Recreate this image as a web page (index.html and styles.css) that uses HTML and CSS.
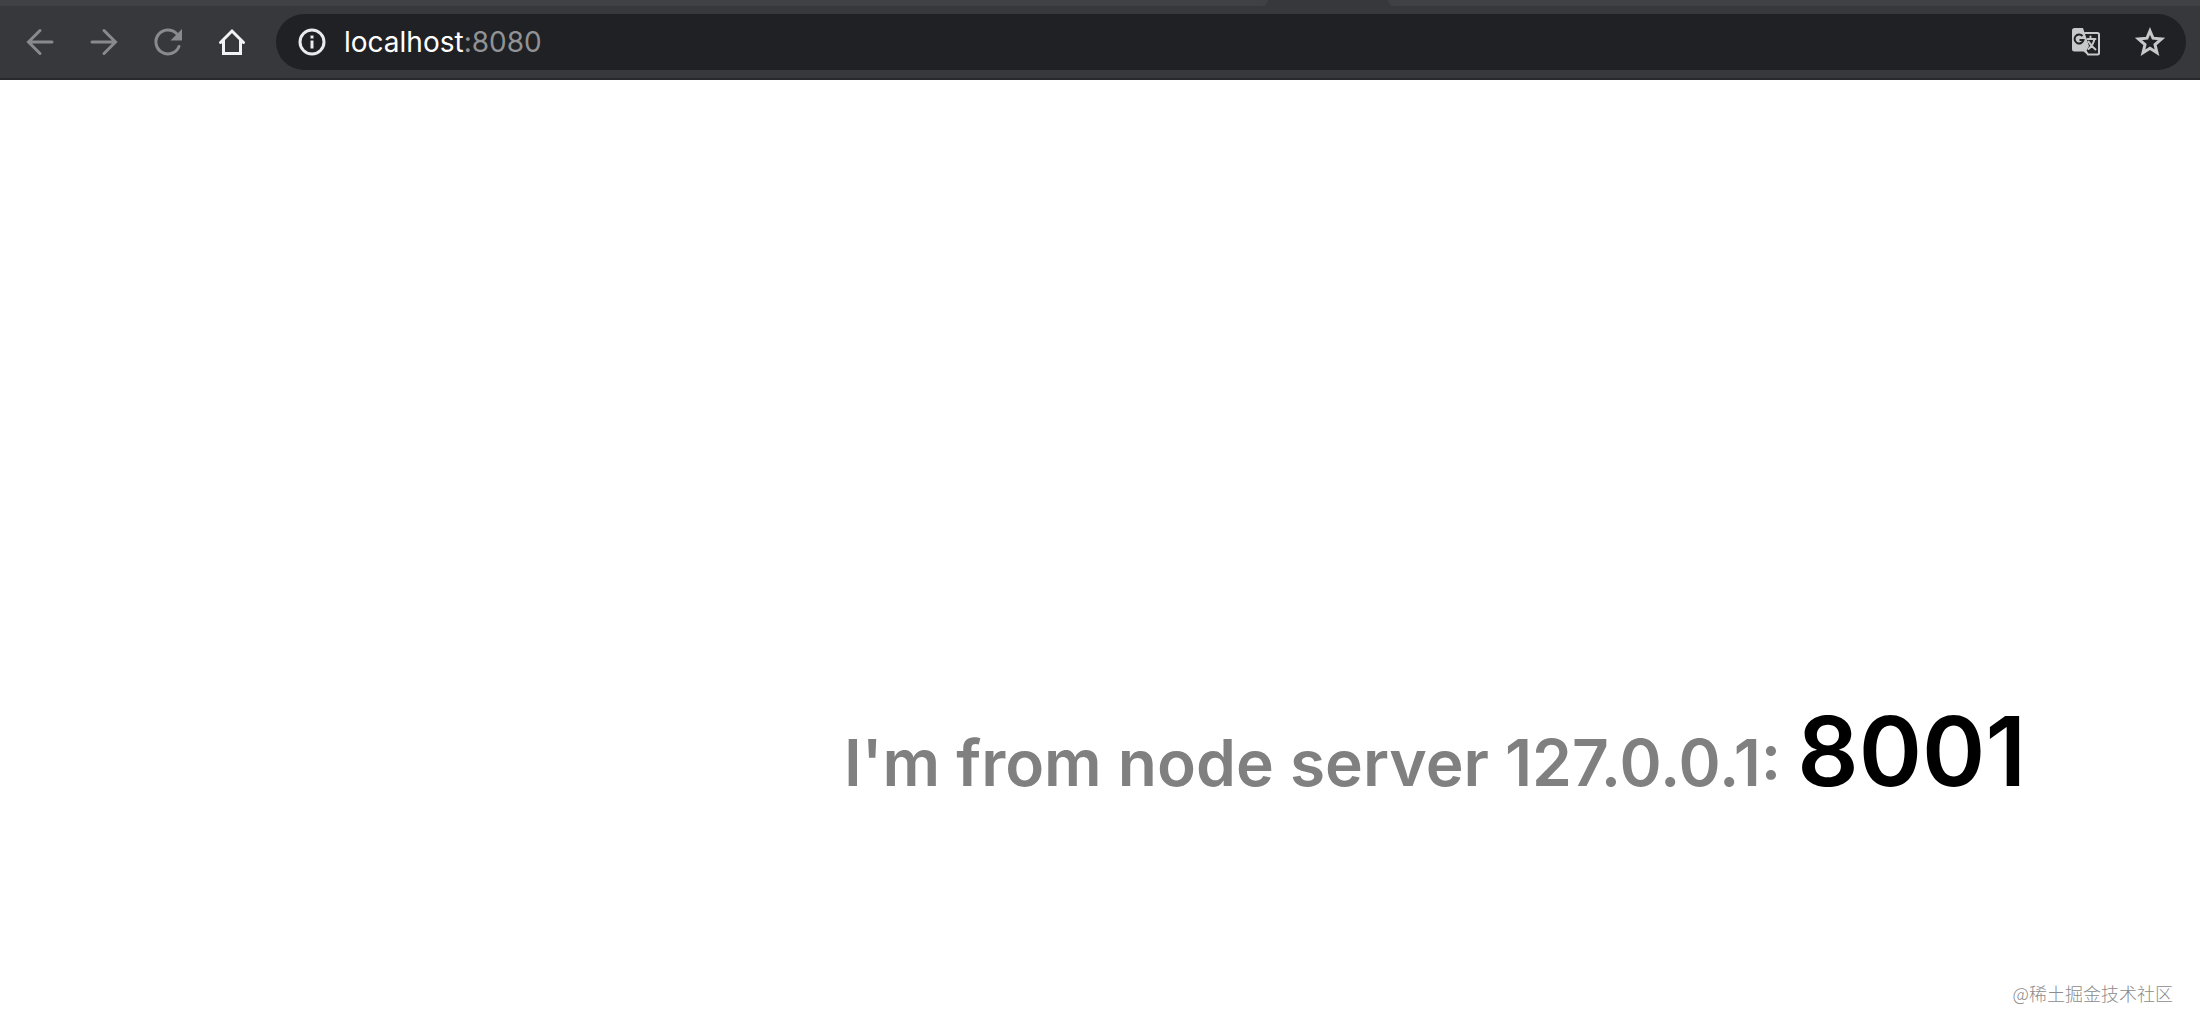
FILE: index.html
```html
<!DOCTYPE html>
<html lang="en">
<head>
<meta charset="utf-8">
<title>localhost:8080</title>
<link rel="stylesheet" href="styles.css">
</head>
<body>
<header class="browser">
  <div class="tab-strip">
    <div class="tabs-before"></div>
    <div class="tab-active"></div>
    <div class="tabs-after"></div>
  </div>
  <div class="toolbar">
    <nav class="nav">
      <button class="icon-button dim" type="button" aria-label="Back">
        <svg viewBox="0 0 32 32"><path d="M28 16H5M16 4.500L4.500 16L16 27.500"/></svg>
      </button>
      <button class="icon-button dim" type="button" aria-label="Forward">
        <svg viewBox="0 0 32 32"><path d="M4 16H27M16 4.500L27.500 16L16 27.500"/></svg>
      </button>
      <button class="icon-button dim" type="button" aria-label="Reload">
        <svg viewBox="0 0 32 32"><path d="M27 20.500A12 12 0 1 1 24.500 7.500"/><path class="fill" d="M30 3V14.500H18.500Z"/></svg>
      </button>
      <button class="icon-button home" type="button" aria-label="Home">
        <svg viewBox="0 0 32 32"><path d="M4.500 16.500L16 5L27.500 16.500M7.500 14.500V27.500H24.500V14.500"/></svg>
      </button>
    </nav>
    <div class="address">
      <svg class="info" viewBox="0 0 32 32"><circle cx="16" cy="16" r="12"/><path class="fill" d="M14.500 14.500H17.500V22.500H14.500ZM14.500 9.500H17.500V12.500H14.500Z"/></svg>
      <span class="url">localhost<span class="port">:8080</span></span>
      <button class="icon-button light" type="button" aria-label="Translate this page">
        <svg viewBox="0 0 32 32">
          <path class="page" d="M15 7H27.500Q29 7 29 8.500V27Q29 28.500 27.500 28.500H18L15 24"/>
          <path class="sheet" d="M4.500 2H13L19 20L16 25.500L18 29L13.500 25.500H4.500Q2 25.500 2 23V4.500Q2 2 4.500 2Z"/>
          <path class="mark" d="M12.500 10A4.500 4.500 0 1 0 13.500 14H9.500"/>
          <path class="glyph" d="M17.500 13H25.500M20.500 10.500V13M24.500 13Q23 19.500 18.500 23M18.500 15.500Q21 20 25.500 23.500"/>
        </svg>
      </button>
      <button class="icon-button light star" type="button" aria-label="Bookmark this page">
        <svg viewBox="0 0 32 32"><path d="M16 5L19 12.200L27.500 12.900L21 18.500L23 26.800L16 22.300L9 26.800L11 18.500L4.500 12.900L13 12.200Z"/></svg>
      </button>
    </div>
  </div>
</header>
<main class="page-body">
  <h1 class="message">I'm from node server 127.0.0.1: <span class="number">8001</span></h1>
</main>
<footer class="credit" lang="zh-CN">@稀土掘金技术社区</footer>
</body>
</html>
```
FILE: styles.css
```css
* { box-sizing: border-box; }

body {
  margin: 0;
  min-height: 100vh;
  display: flex;
  flex-direction: column;
  background: #fff;
  font-family: Inter, "Liberation Sans", sans-serif;
}

.browser {
  background: #37383b;
  border-bottom: 2px solid #28292c;
}

.tab-strip { display: flex; height: 6px; }
.tabs-before,
.tabs-after { background: #404145; }
.tabs-before { flex: 1268; border-bottom-right-radius: 6px; }
.tab-active { flex: 120; }
.tabs-after { flex: 812; border-bottom-left-radius: 6px; }

.toolbar {
  display: flex;
  align-items: center;
  gap: 28px;
  padding: 8px 14px 8px 24px;
}

.nav { display: flex; gap: 32px; }

.icon-button {
  display: block;
  width: 32px;
  height: 32px;
  padding: 0;
  border: 0;
  background: none;
  color: #898a8d;
}

svg {
  display: block;
  width: 32px;
  height: 32px;
  fill: none;
  stroke: currentColor;
  stroke-width: 3;
  stroke-linecap: round;
}

.fill { fill: currentColor; stroke: none; }
.home { color: #f1f3f4; }
.light { color: #c7c8ca; }

.address {
  flex: 1;
  display: flex;
  align-items: center;
  height: 56px;
  padding: 0 20px;
  border-radius: 28px;
  background: #202124;
}

.info { color: #e8eaed; }

.url {
  flex: 1;
  padding-left: 16px;
  font-size: 28px;
  line-height: 36px;
  color: #fff;
}

.port { color: #919295; }
.star { margin-left: 32px; }
.star svg { stroke-linecap: butt; }
.page { stroke-width: 2; }
.sheet { fill: currentColor; stroke: none; }
.mark { stroke: #202124; stroke-width: 2; stroke-linecap: butt; }
.glyph { stroke-width: 2; }

.page-body {
  flex: 1;
  display: flex;
  align-items: flex-end;
  justify-content: flex-end;
  padding: 0 174px 156px 24px;
}

.message {
  margin: 0;
  font-size: 64px;
  line-height: 120px;
  font-weight: 600;
  color: #808080;
}

.number { font-size: 96px; color: #000; }

.credit {
  padding: 0 27px 25px;
  text-align: right;
  font-family: "Noto Sans CJK SC", sans-serif;
  font-size: 18px;
  line-height: 28px;
  font-weight: 300;
  color: #8c8c8c;
}
```
